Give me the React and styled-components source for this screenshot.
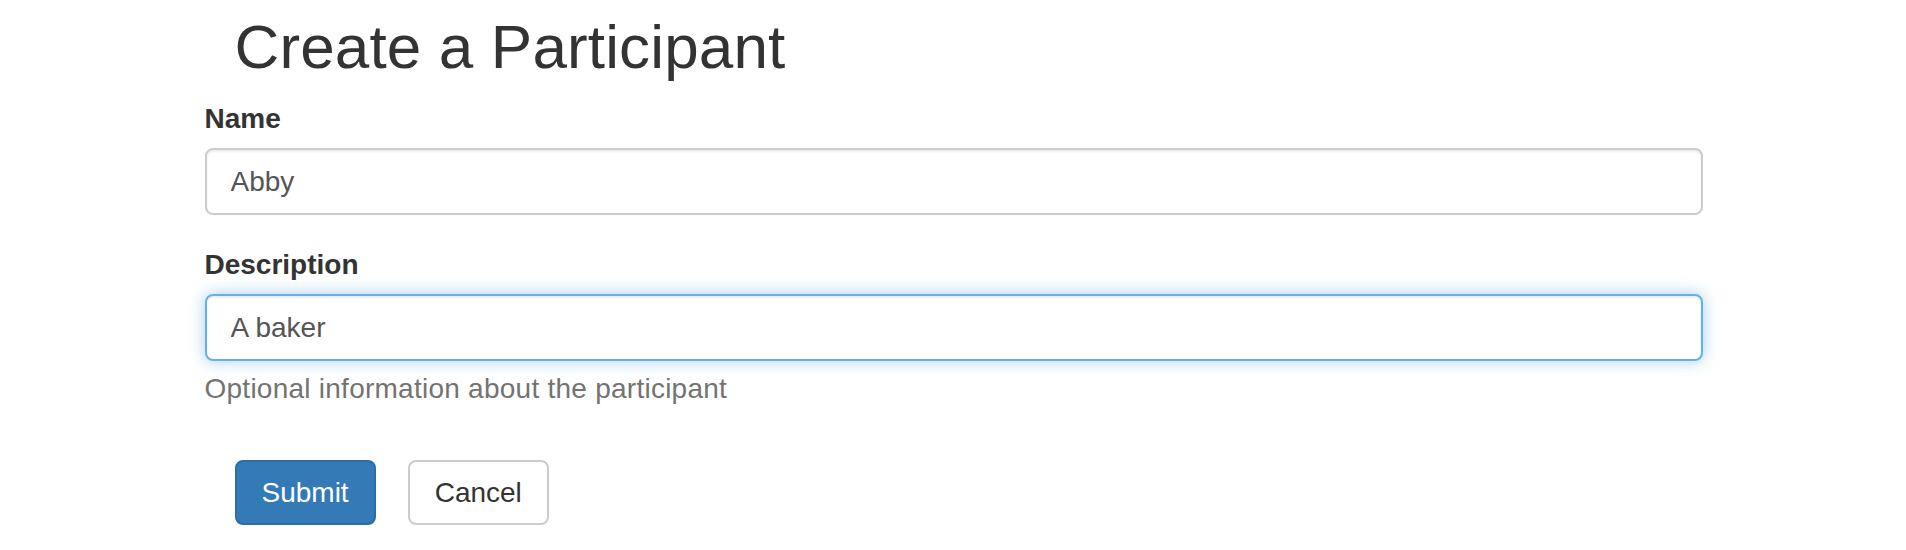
import React from 'react';
import styled, { createGlobalStyle } from 'styled-components';

const GlobalStyle = createGlobalStyle`
  html, body {
    margin: 0;
    padding: 0;
    background: #fff;
  }
  body {
    font-family: 'Liberation Sans', Arial, sans-serif;
    color: #333;
  }
`;

const Page = styled.div`
  width: 1498px;
  margin: 0 auto;
  padding: 13px 0 0 1px;
`;

const Title = styled.h1`
  margin: 0 0 18px;
  padding-left: 30px;
  font-size: 62px;
  line-height: 68px;
  font-weight: 400;
  letter-spacing: 0.15px;
  color: #333;
`;

const Form = styled.form`
  display: flex;
  flex-direction: column;
`;

const Group = styled.div`
  display: flex;
  flex-direction: column;
  margin-bottom: ${(props) => props.$gap || 30}px;
`;

const Label = styled.label`
  font-size: 28px;
  line-height: 40px;
  font-weight: 700;
  color: #333;
  margin-bottom: 9px;
`;

const Input = styled.input`
  box-sizing: border-box;
  width: 100%;
  height: 67px;
  padding: 0 24px;
  font-family: 'Liberation Sans', Arial, sans-serif;
  font-size: 28px;
  line-height: 40px;
  color: #555;
  background: #fff;
  border: 2px solid ${(props) => (props.$focused ? '#66afe9' : '#ccc')};
  border-radius: 8px;
  outline: none;
  box-shadow: ${(props) =>
    props.$focused
      ? 'inset 0 2px 2px rgba(0,0,0,.075), 0 0 16px rgba(102,175,233,.6)'
      : 'inset 0 2px 2px rgba(0,0,0,.075)'};
`;

const Help = styled.span`
  display: block;
  margin-top: 8px;
  font-size: 28px;
  line-height: 40px;
  letter-spacing: 0.25px;
  color: #737373;
`;

const Actions = styled.div`
  display: flex;
  gap: 32px;
  padding-left: 30px;
`;

const Button = styled.button`
  box-sizing: border-box;
  height: 65px;
  padding: 0 25px;
  font-family: 'Liberation Sans', Arial, sans-serif;
  font-size: 28px;
  line-height: 40px;
  border-radius: 8px;
  border: 2px solid ${(props) => (props.$primary ? '#2e6da4' : '#ccc')};
  background: ${(props) => (props.$primary ? '#337ab7' : '#fff')};
  color: ${(props) => (props.$primary ? '#fff' : '#333')};
  cursor: pointer;
`;

const App = () => {
  return (
    <>
      <GlobalStyle />
      <Page>
        <Title>Create a Participant</Title>
        <Form onSubmit={(e) => e.preventDefault()}>
          <Group>
            <Label htmlFor="name">Name</Label>
            <Input id="name" value="Abby" readOnly />
          </Group>
          <Group $gap={51}>
            <Label htmlFor="description">Description</Label>
            <Input id="description" value="A baker" readOnly $focused />
            <Help>Optional information about the participant</Help>
          </Group>
          <Actions>
            <Button type="submit" $primary>
              Submit
            </Button>
            <Button type="button">Cancel</Button>
          </Actions>
        </Form>
      </Page>
    </>
  );
};

export default App;
